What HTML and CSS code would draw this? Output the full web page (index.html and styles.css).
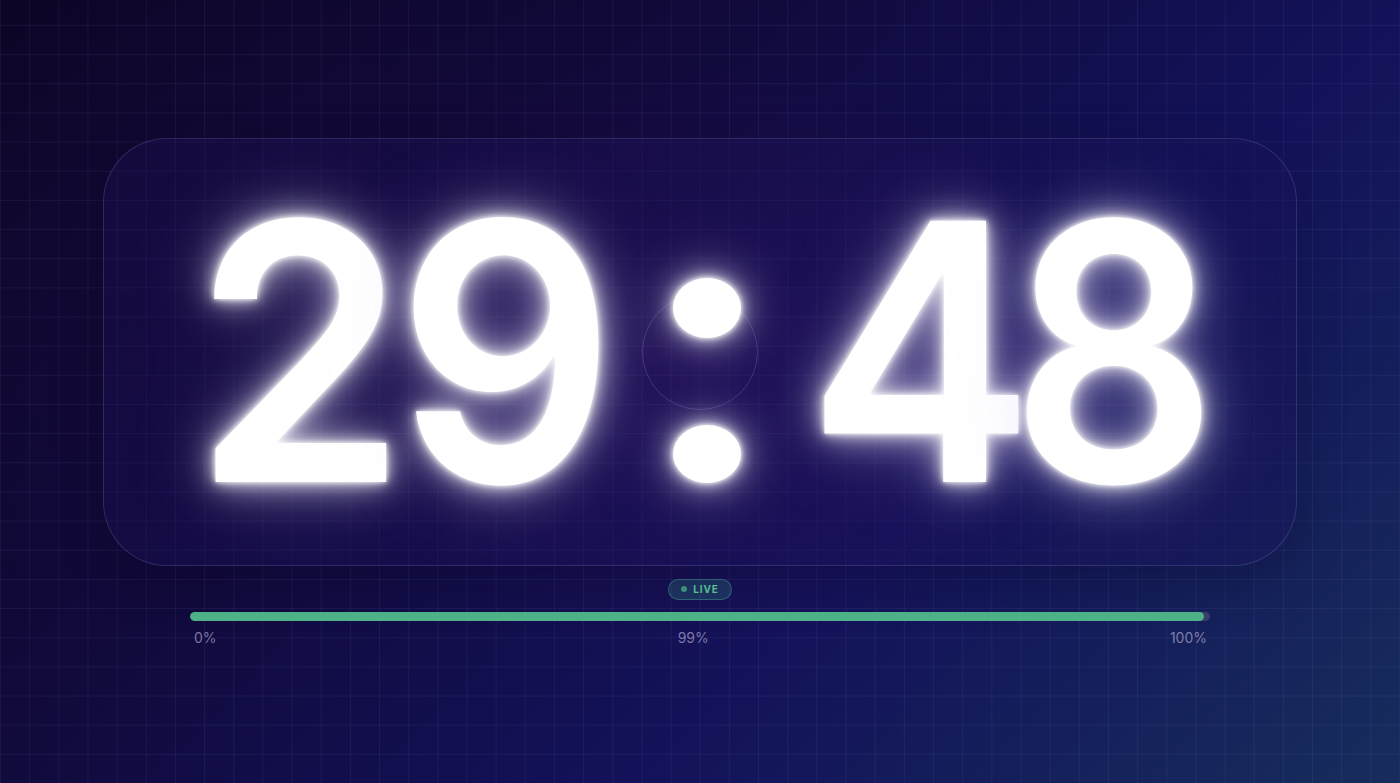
FILE: index.html
```html
<!DOCTYPE html>
<html lang="en">
<head>
<meta charset="utf-8">
<title>Countdown</title>
<link rel="stylesheet" href="styles.css">
</head>
<body>
<div class="bg-grid"></div>
<main class="stage">
  <section class="clock-card">
    <div class="ring"></div>
    <div class="time">
      <span class="d">2</span><span class="d">9</span><span class="colon"><span class="colon-text">:</span><span class="dot"></span><span class="dot dot-low"></span></span><span class="d d-four">4</span><span class="d d-eight">8</span>
    </div>
  </section>
  <div class="live-badge"><span class="live-dot"></span><span class="live-text">LIVE</span></div>
  <div class="progress">
    <div class="track"><div class="fill" style="width: 99.4%"></div></div>
    <div class="labels"><span>0%</span><span>99%</span><span>100%</span></div>
  </div>
</main>
</body>
</html>
```

FILE: styles.css
```css
* { box-sizing: border-box; }
html, body { margin: 0; padding: 0; height: 100%; }
body {
  font-family: Inter, "Noto Sans", sans-serif;
  background:
    radial-gradient(ellipse 420px 300px at 700px 360px, rgba(70, 20, 110, 0.32), rgba(70, 20, 110, 0) 100%),
    radial-gradient(ellipse 500px 350px at 250px 260px, rgba(45, 10, 75, 0.22), rgba(45, 10, 75, 0) 100%),
    linear-gradient(135deg, #0b0524 0%, #110a3c 35%, #13125a 65%, #172d5c 100%);
  overflow: hidden;
  position: relative;
  color: #fff;
}
.bg-grid {
  position: absolute;
  inset: 0;
  background-image:
    linear-gradient(to right, rgba(140, 150, 220, 0.085) 1px, transparent 1px),
    linear-gradient(to bottom, rgba(140, 150, 220, 0.085) 1px, transparent 1px);
  background-size: 29.1667px 29.1667px;
  background-position: left bottom;
  pointer-events: none;
}
.stage {
  position: relative;
  height: 100%;
  display: flex;
  flex-direction: column;
  align-items: center;
  justify-content: center;
}
.clock-card {
  position: relative;
  width: 1194px;
  height: 428px;
  border-radius: 64px;
  border: 1px solid rgba(190, 190, 255, 0.16);
  background: rgba(25, 18, 85, 0.35);
  box-shadow: 0 16px 50px rgba(5, 2, 20, 0.22);
  display: flex;
  align-items: center;
  justify-content: center;
  padding-left: 14px;
}
.ring {
  position: absolute;
  left: 50%;
  top: 50%;
  width: 116px;
  height: 116px;
  margin: -58px 0 0 -58px;
  border-radius: 50%;
  border: 1px solid rgba(200, 190, 255, 0.18);
}
.time {
  position: relative;
  display: flex;
  height: 359px;
  font-weight: 600;
  font-size: 359px;
  line-height: 359px;
  color: #fff;
  font-feature-settings: "tnum";
}
.d {
  display: flex;
  justify-content: center;
  width: 206px;
  transform: scaleX(0.955);
  text-shadow:
    0 0 5px rgba(255, 255, 255, 0.95),
    0 0 14px rgba(255, 255, 255, 0.85),
    0 0 30px rgba(255, 255, 255, 0.62),
    0 0 56px rgba(230, 225, 255, 0.48),
    0 0 100px rgba(200, 190, 255, 0.24);
}
.d-four { letter-spacing: -28px; }
.d-eight { transform: scaleX(0.9); }
.colon {
  position: relative;
  width: 196px;
  display: flex;
  flex-direction: column;
  align-items: center;
  padding-top: 106px;
  gap: 87px;
}
.colon-text {
  position: absolute;
  left: 0;
  right: 0;
  top: 0;
  text-align: center;
  color: transparent;
}
.dot {
  width: 68px;
  height: 60px;
  border-radius: 50%;
  background: #fff;
  box-shadow:
    0 0 5px rgba(255, 255, 255, 0.95),
    0 0 14px rgba(255, 255, 255, 0.85),
    0 0 30px rgba(255, 255, 255, 0.62),
    0 0 56px rgba(230, 225, 255, 0.48),
    0 0 100px rgba(200, 190, 255, 0.24);
}
.dot-low { height: 58px; }
.live-badge {
  margin-top: 13px;
  height: 21px;
  width: 64px;
  border-radius: 11px;
  border: 1px solid rgba(90, 200, 170, 0.35);
  background: rgba(50, 130, 130, 0.32);
  display: flex;
  align-items: center;
  justify-content: center;
  gap: 6px;
}
.live-dot {
  width: 6px;
  height: 6px;
  border-radius: 50%;
  background: #3f9f82;
}
.live-text {
  font-size: 10px;
  font-weight: 700;
  letter-spacing: 0.09em;
  color: #5ccf9f;
}
.progress {
  margin-top: 12px;
  width: 1020px;
}
.track {
  height: 9px;
  border-radius: 5px;
  background: rgba(120, 120, 150, 0.35);
  overflow: hidden;
}
.fill {
  height: 100%;
  border-radius: 5px;
  background: #4fb48a;
}
.labels {
  display: flex;
  justify-content: space-between;
  padding: 0 3px 0 4px;
  margin-top: 8px;
  font-size: 14px;
  color: rgba(195, 190, 225, 0.6);
}
```
